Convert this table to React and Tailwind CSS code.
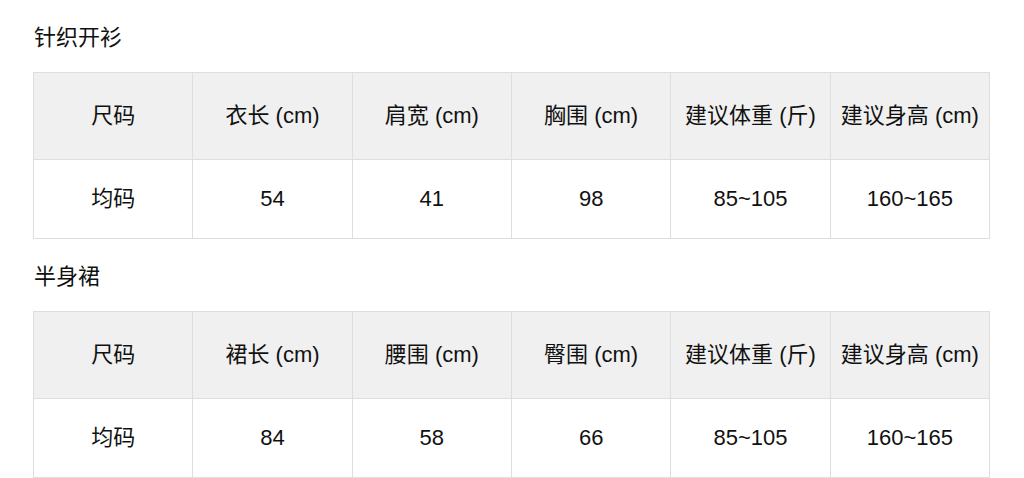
import React from 'react'

const headers1 = ['尺码', '衣长 (cm)', '肩宽 (cm)', '胸围 (cm)', '建议体重 (斤)', '建议身高 (cm)']
const row1 = ['均码', '54', '41', '98', '85~105', '160~165']
const headers2 = ['尺码', '裙长 (cm)', '腰围 (cm)', '臀围 (cm)', '建议体重 (斤)', '建议身高 (cm)']
const row2 = ['均码', '84', '58', '66', '85~105', '160~165']

const SizeTable = ({ headers, row }) => (
    <table className="w-[957px] table-fixed border-collapse">
        <thead>
            <tr>
                {headers.map(h => (
                    <th key={h} className="h-[87px] border border-[#dedede] bg-[#f0f0f0] font-normal text-center">{h}</th>
                ))}
            </tr>
        </thead>
        <tbody>
            <tr>
                {row.map((v, i) => (
                    <td key={i} className="h-[79px] border border-[#dedede] bg-white text-center">{v}</td>
                ))}
            </tr>
        </tbody>
    </table>
)

const App = () => {
    return (
        <div className="w-[1024px] h-[478px] bg-white pl-[33px] pt-[24px] text-[22px] leading-[28px] text-[#111] overflow-hidden"
            style={{ fontFamily: '"Liberation Sans", "Noto Sans CJK SC", sans-serif' }}>
            {/* 针织开衫 */}
            <h2 className="text-[22px] leading-[28px] pl-[1px] mb-[20px]">针织开衫</h2>
            <SizeTable headers={headers1} row={row1} />

            {/* 半身裙 */}
            <h2 className="text-[22px] leading-[28px] pl-[1px] mt-[24px] mb-[20px]">半身裙</h2>
            <SizeTable headers={headers2} row={row2} />
        </div>
    )
}

export default App
